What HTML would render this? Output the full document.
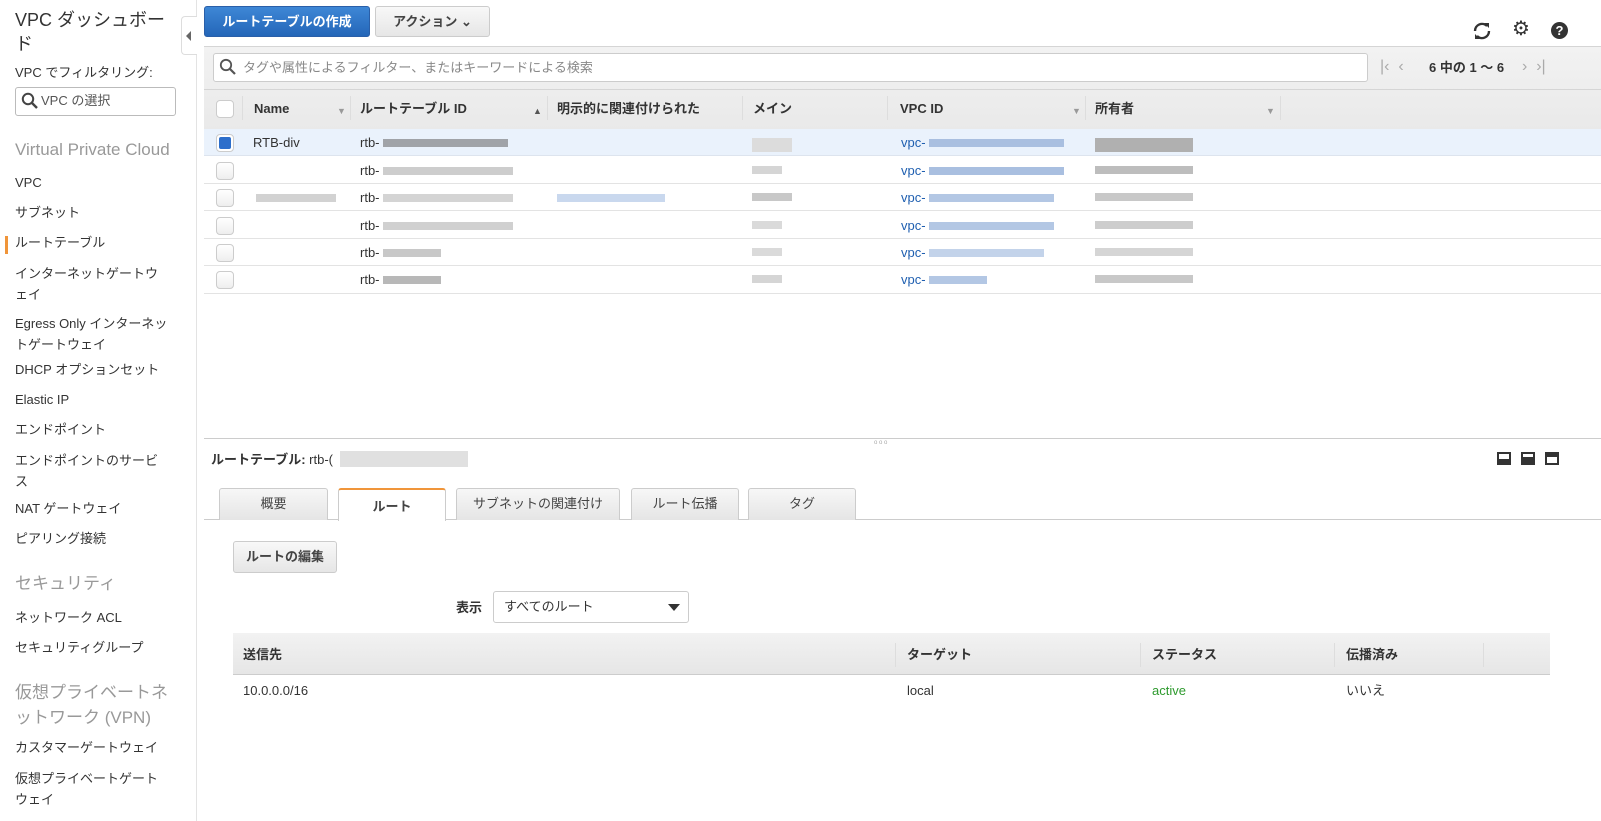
<!DOCTYPE html>
<html><head><meta charset="utf-8"><style>
*{box-sizing:border-box;margin:0;padding:0}
body{width:1601px;height:821px;overflow:hidden;background:#fff;font-family:"Liberation Sans","Noto Sans CJK JP",sans-serif;font-size:13px;line-height:16px;color:#333;position:relative}
.a{position:absolute;white-space:nowrap}
.side div.n{position:absolute;left:15px;font-size:13px;color:#333;line-height:21px;white-space:nowrap}
.sec{position:absolute;left:15px;font-size:17px;color:#999;line-height:26px;white-space:nowrap}
.btn{position:absolute;border:1px solid #ccc;border-radius:3px;background:linear-gradient(#f8f8f8,#e6e6e6);font-weight:bold;text-align:center;color:#444;white-space:nowrap}
.cb{position:absolute;left:216px;width:18px;height:18px;border:1px solid #ccc;border-radius:4px;background:linear-gradient(#fff,#eee)}
.row{position:absolute;left:204px;width:1397px;height:27px;border-bottom:1px solid #e3e3e3}
.blur{position:absolute;height:8px}
.th{position:absolute;top:101px;font-weight:bold;color:#333;line-height:16px;white-space:nowrap}
.sep{position:absolute;top:96px;width:1px;height:24px;background:#ddd}
.tab{position:absolute;top:488px;height:32px;border:1px solid #ccc;border-bottom:none;border-radius:3px 3px 0 0;background:linear-gradient(#f7f7f7,#e5e5e5);text-align:center;line-height:30px;color:#444;white-space:nowrap;font-size:13px}
</style></head><body>
<div class="side">
<div class="a" style="left:15px;top:8px;font-size:18px;line-height:24px;color:#333;width:170px;white-space:normal">VPC ダッシュボー<br>ド</div>
<div class="n" style="top:62px">VPC でフィルタリング:</div>
<div class="a" style="left:15px;top:87px;width:161px;height:29px;border:1px solid #bbb;border-radius:3px"></div>
<svg class="a" style="left:21px;top:92px" width="18" height="18" viewBox="0 0 18 18"><circle cx="7" cy="7" r="5.2" fill="none" stroke="#444" stroke-width="2"/><path d="M11 11l5 5" stroke="#444" stroke-width="2.4"/></svg>
<div class="a" style="left:41px;top:93px;color:#555;font-size:13px">VPC の選択</div>
<div class="sec" style="top:137px">Virtual Private Cloud</div>
<div class="n" style="top:172px">VPC</div>
<div class="n" style="top:202px">サブネット</div>
<div class="a" style="left:5px;top:236px;width:3px;height:18px;background:#f0953a"></div>
<div class="n" style="top:232px">ルートテーブル</div>
<div class="n" style="top:263px">インターネットゲートウ<br>ェイ</div>
<div class="n" style="top:313px">Egress Only インターネッ<br>トゲートウェイ</div>
<div class="n" style="top:359px">DHCP オプションセット</div>
<div class="n" style="top:389px">Elastic IP</div>
<div class="n" style="top:419px">エンドポイント</div>
<div class="n" style="top:450px">エンドポイントのサービ<br>ス</div>
<div class="n" style="top:498px">NAT ゲートウェイ</div>
<div class="n" style="top:528px">ピアリング接続</div>
<div class="sec" style="top:571px">セキュリティ</div>
<div class="n" style="top:607px">ネットワーク ACL</div>
<div class="n" style="top:637px">セキュリティグループ</div>
<div class="sec" style="top:680px;line-height:25px">仮想プライベートネ<br>ットワーク (VPN)</div>
<div class="n" style="top:737px">カスタマーゲートウェイ</div>
<div class="n" style="top:768px">仮想プライベートゲート<br>ウェイ</div>
</div>
<div class="a" style="left:196px;top:0;width:1px;height:821px;background:#e3e3e3"></div>
<div class="a" style="left:181px;top:16px;width:16px;height:39px;border:1px solid #ddd;border-right:none;border-radius:4px 0 0 4px;background:#fff"></div>
<div class="a" style="left:186px;top:31px;width:0;height:0;border-top:5px solid transparent;border-bottom:5px solid transparent;border-right:5px solid #666"></div>

<div class="btn" style="left:204px;top:6px;width:166px;height:31px;background:linear-gradient(#3e87d6,#2466b8);border-color:#2a5fa8;color:#fff;line-height:29px">ルートテーブルの作成</div>
<div class="btn" style="left:375px;top:6px;width:115px;height:31px;line-height:29px">アクション ⌄</div>
<svg class="a" style="left:1471px;top:21px" width="22" height="20" viewBox="0 0 22 20"><path d="M4 10a7 7 0 0 1 12-5" fill="none" stroke="#333" stroke-width="2.4"/><path d="M18 10a7 7 0 0 1-12 5" fill="none" stroke="#333" stroke-width="2.4"/><path d="M13 2l5 0 0 5z M9 18l-5 0 0-5z" fill="#333"/></svg>
<div class="a" style="left:1512px;top:19px;font-size:20px;line-height:20px;color:#333">⚙</div>
<div class="a" style="left:1551px;top:22px;width:17px;height:17px;border-radius:50%;background:#333;color:#fff;font-weight:bold;font-size:13px;text-align:center;line-height:17px">?</div>

<div class="a" style="left:204px;top:46px;width:1397px;height:84px;background:linear-gradient(#f2f2f2,#e9e9e9);border-top:1px solid #d5d5d5"></div>
<div class="a" style="left:204px;top:89px;width:1397px;height:1px;background:#d5d5d5"></div>
<div class="a" style="left:213px;top:53px;width:1155px;height:29px;background:#fff;border:1px solid #ccc;border-radius:3px"></div>
<svg class="a" style="left:219px;top:58px" width="18" height="18" viewBox="0 0 18 18"><circle cx="7" cy="7" r="5.2" fill="none" stroke="#555" stroke-width="1.8"/><path d="M11 11l5 5" stroke="#555" stroke-width="2.2"/></svg>
<div class="a" style="left:243px;top:60px;color:#888;font-size:13px">タグや属性によるフィルター、またはキーワードによる検索</div>
<div class="a" style="left:1380px;top:59px;color:#aaa;font-size:16px">|‹&nbsp;&nbsp;‹</div>
<div class="a" style="left:1429px;top:60px;font-weight:bold;color:#333">6 中の 1 〜 6</div>
<div class="a" style="left:1522px;top:59px;color:#aaa;font-size:16px">›&nbsp;&nbsp;›|</div>
<div class="a" style="left:216px;top:100px;width:18px;height:18px;border:1px solid #ccc;border-radius:4px;background:#fff"></div>
<div class="sep" style="left:242px"></div><div class="sep" style="left:350px"></div><div class="sep" style="left:547px"></div><div class="sep" style="left:742px"></div><div class="sep" style="left:887px"></div><div class="sep" style="left:1085px"></div><div class="sep" style="left:1280px"></div>
<div class="th" style="left:254px">Name</div><div class="a" style="left:337px;top:103px;color:#999;font-size:9px">▼</div>
<div class="th" style="left:360px">ルートテーブル ID</div><div class="a" style="left:533px;top:103px;color:#555;font-size:9px">▲</div>
<div class="th" style="left:557px">明示的に関連付けられた</div>
<div class="th" style="left:753px">メイン</div>
<div class="th" style="left:900px">VPC ID</div><div class="a" style="left:1072px;top:103px;color:#999;font-size:9px">▼</div>
<div class="th" style="left:1095px">所有者</div><div class="a" style="left:1266px;top:103px;color:#999;font-size:9px">▼</div>

<div class="row" style="top:129px;background:#eaf2fc;border-color:#dde4ee"></div>
<div class="row" style="top:157px"></div><div class="row" style="top:184px"></div><div class="row" style="top:212px"></div><div class="row" style="top:239px"></div><div class="row" style="top:266px;border:none"></div>
<div class="a" style="left:204px;top:293px;width:1397px;height:1px;background:#e3e3e3"></div>
<div class="cb" style="top:134px;background:#fff"><div style="margin:2px;width:12px;height:12px;background:#2c6ecb;border-radius:2px"></div></div>
<div class="cb" style="top:162px"></div><div class="cb" style="top:189px"></div><div class="cb" style="top:217px"></div><div class="cb" style="top:244px"></div><div class="cb" style="top:271px"></div>
<div class="a" style="left:253px;top:135px">RTB-div</div>
<div class="a" style="left:360px;top:135px">rtb-</div><div class="blur" style="left:383px;top:139px;width:125px;background:#a0a3a8"></div>
<div class="a" style="left:360px;top:163px">rtb-</div><div class="blur" style="left:383px;top:167px;width:130px;background:#cdcdcd"></div>
<div class="a" style="left:360px;top:190px">rtb-</div><div class="blur" style="left:383px;top:194px;width:130px;background:#d4d4d4"></div>
<div class="a" style="left:360px;top:218px">rtb-</div><div class="blur" style="left:383px;top:222px;width:130px;background:#d0d0d0"></div>
<div class="a" style="left:360px;top:245px">rtb-</div><div class="blur" style="left:383px;top:249px;width:58px;background:#c8c8c8"></div>
<div class="a" style="left:360px;top:272px">rtb-</div><div class="blur" style="left:383px;top:276px;width:58px;background:#b8b8b8"></div>
<div class="blur" style="left:256px;top:194px;width:80px;background:#d2d2d2"></div>
<div class="blur" style="left:557px;top:194px;width:108px;background:#c9d8ee"></div>
<div class="blur" style="left:752px;top:138px;width:40px;height:14px;background:#dcdcdc"></div>
<div class="blur" style="left:752px;top:166px;width:30px;background:#d5d5d5"></div>
<div class="blur" style="left:752px;top:193px;width:40px;background:#c8c8c8"></div>
<div class="blur" style="left:752px;top:221px;width:30px;background:#dadada"></div>
<div class="blur" style="left:752px;top:248px;width:30px;background:#dadada"></div>
<div class="blur" style="left:752px;top:275px;width:30px;background:#d5d5d5"></div>
<div class="a" style="left:901px;top:135px;color:#1f5fb0">vpc-</div><div class="blur" style="left:929px;top:139px;width:135px;background:#a9bfe0"></div>
<div class="a" style="left:901px;top:163px;color:#1f5fb0">vpc-</div><div class="blur" style="left:929px;top:167px;width:135px;background:#a9bfe0"></div>
<div class="a" style="left:901px;top:190px;color:#1f5fb0">vpc-</div><div class="blur" style="left:929px;top:194px;width:125px;background:#b3c7e4"></div>
<div class="a" style="left:901px;top:218px;color:#1f5fb0">vpc-</div><div class="blur" style="left:929px;top:222px;width:125px;background:#b3c7e4"></div>
<div class="a" style="left:901px;top:245px;color:#1f5fb0">vpc-</div><div class="blur" style="left:929px;top:249px;width:115px;background:#c3d3ea"></div>
<div class="a" style="left:901px;top:272px;color:#1f5fb0">vpc-</div><div class="blur" style="left:929px;top:276px;width:58px;background:#b3c7e4"></div>
<div class="blur" style="left:1095px;top:138px;width:98px;height:14px;background:#b0b0b0"></div>
<div class="blur" style="left:1095px;top:166px;width:98px;background:#bdbdbd"></div>
<div class="blur" style="left:1095px;top:193px;width:98px;background:#c8c8c8"></div>
<div class="blur" style="left:1095px;top:221px;width:98px;background:#cdcdcd"></div>
<div class="blur" style="left:1095px;top:248px;width:98px;background:#d5d5d5"></div>
<div class="blur" style="left:1095px;top:275px;width:98px;background:#c8c8c8"></div>

<div class="a" style="left:204px;top:438px;width:1397px;height:1px;background:#ccc"></div>
<div class="a" style="left:874px;top:440px;font-size:6px;line-height:6px;color:#aaa">o o o</div>
<div class="a" style="left:211px;top:452px;font-weight:bold;color:#333">ルートテーブル: <span style="font-weight:normal">rtb-(</span></div>
<div class="blur" style="left:340px;top:451px;width:128px;height:16px;background:#e0e0e0"></div>
<div class="a" style="left:1497px;top:452px;width:14px;height:13px;border:2px solid #333;border-bottom-width:6px"></div>
<div class="a" style="left:1521px;top:452px;width:14px;height:13px;border:2px solid #333;border-bottom-width:8px"></div>
<div class="a" style="left:1545px;top:452px;width:14px;height:13px;border:2px solid #333;border-top-width:5px"></div>
<div class="a" style="left:204px;top:519px;width:1397px;height:1px;background:#ccc"></div>
<div class="tab" style="left:219px;width:109px">概要</div>
<div class="tab" style="left:338px;width:108px;height:33px;background:#fff;border-top:2px solid #f0953a;font-weight:bold;line-height:34px">ルート</div>
<div class="tab" style="left:456px;width:164px">サブネットの関連付け</div>
<div class="tab" style="left:631px;width:108px">ルート伝播</div>
<div class="tab" style="left:748px;width:108px">タグ</div>
<div class="btn" style="left:233px;top:541px;width:104px;height:32px;line-height:30px">ルートの編集</div>
<div class="a" style="left:456px;top:600px;font-weight:bold">表示</div>
<div class="a" style="left:493px;top:591px;width:196px;height:32px;border:1px solid #ccc;border-radius:3px;background:#fff;padding:7px 10px">すべてのルート</div>
<div class="a" style="left:668px;top:604px;width:0;height:0;border-left:6px solid transparent;border-right:6px solid transparent;border-top:7px solid #333"></div>
<div class="a" style="left:233px;top:633px;width:1317px;height:42px;background:linear-gradient(#f2f2f2,#e6e6e6);border-bottom:1px solid #ccc"></div>
<div class="a" style="left:895px;top:643px;width:1px;height:24px;background:#ddd"></div>
<div class="a" style="left:1140px;top:643px;width:1px;height:24px;background:#ddd"></div>
<div class="a" style="left:1334px;top:643px;width:1px;height:24px;background:#ddd"></div>
<div class="a" style="left:1483px;top:643px;width:1px;height:24px;background:#ddd"></div>
<div class="a" style="left:243px;top:647px;font-weight:bold">送信先</div>
<div class="a" style="left:907px;top:647px;font-weight:bold">ターゲット</div>
<div class="a" style="left:1152px;top:647px;font-weight:bold">ステータス</div>
<div class="a" style="left:1346px;top:647px;font-weight:bold">伝播済み</div>
<div class="a" style="left:243px;top:683px">10.0.0.0/16</div>
<div class="a" style="left:907px;top:683px">local</div>
<div class="a" style="left:1152px;top:683px;color:#2e9a2e">active</div>
<div class="a" style="left:1346px;top:683px">いいえ</div>
</body></html>
